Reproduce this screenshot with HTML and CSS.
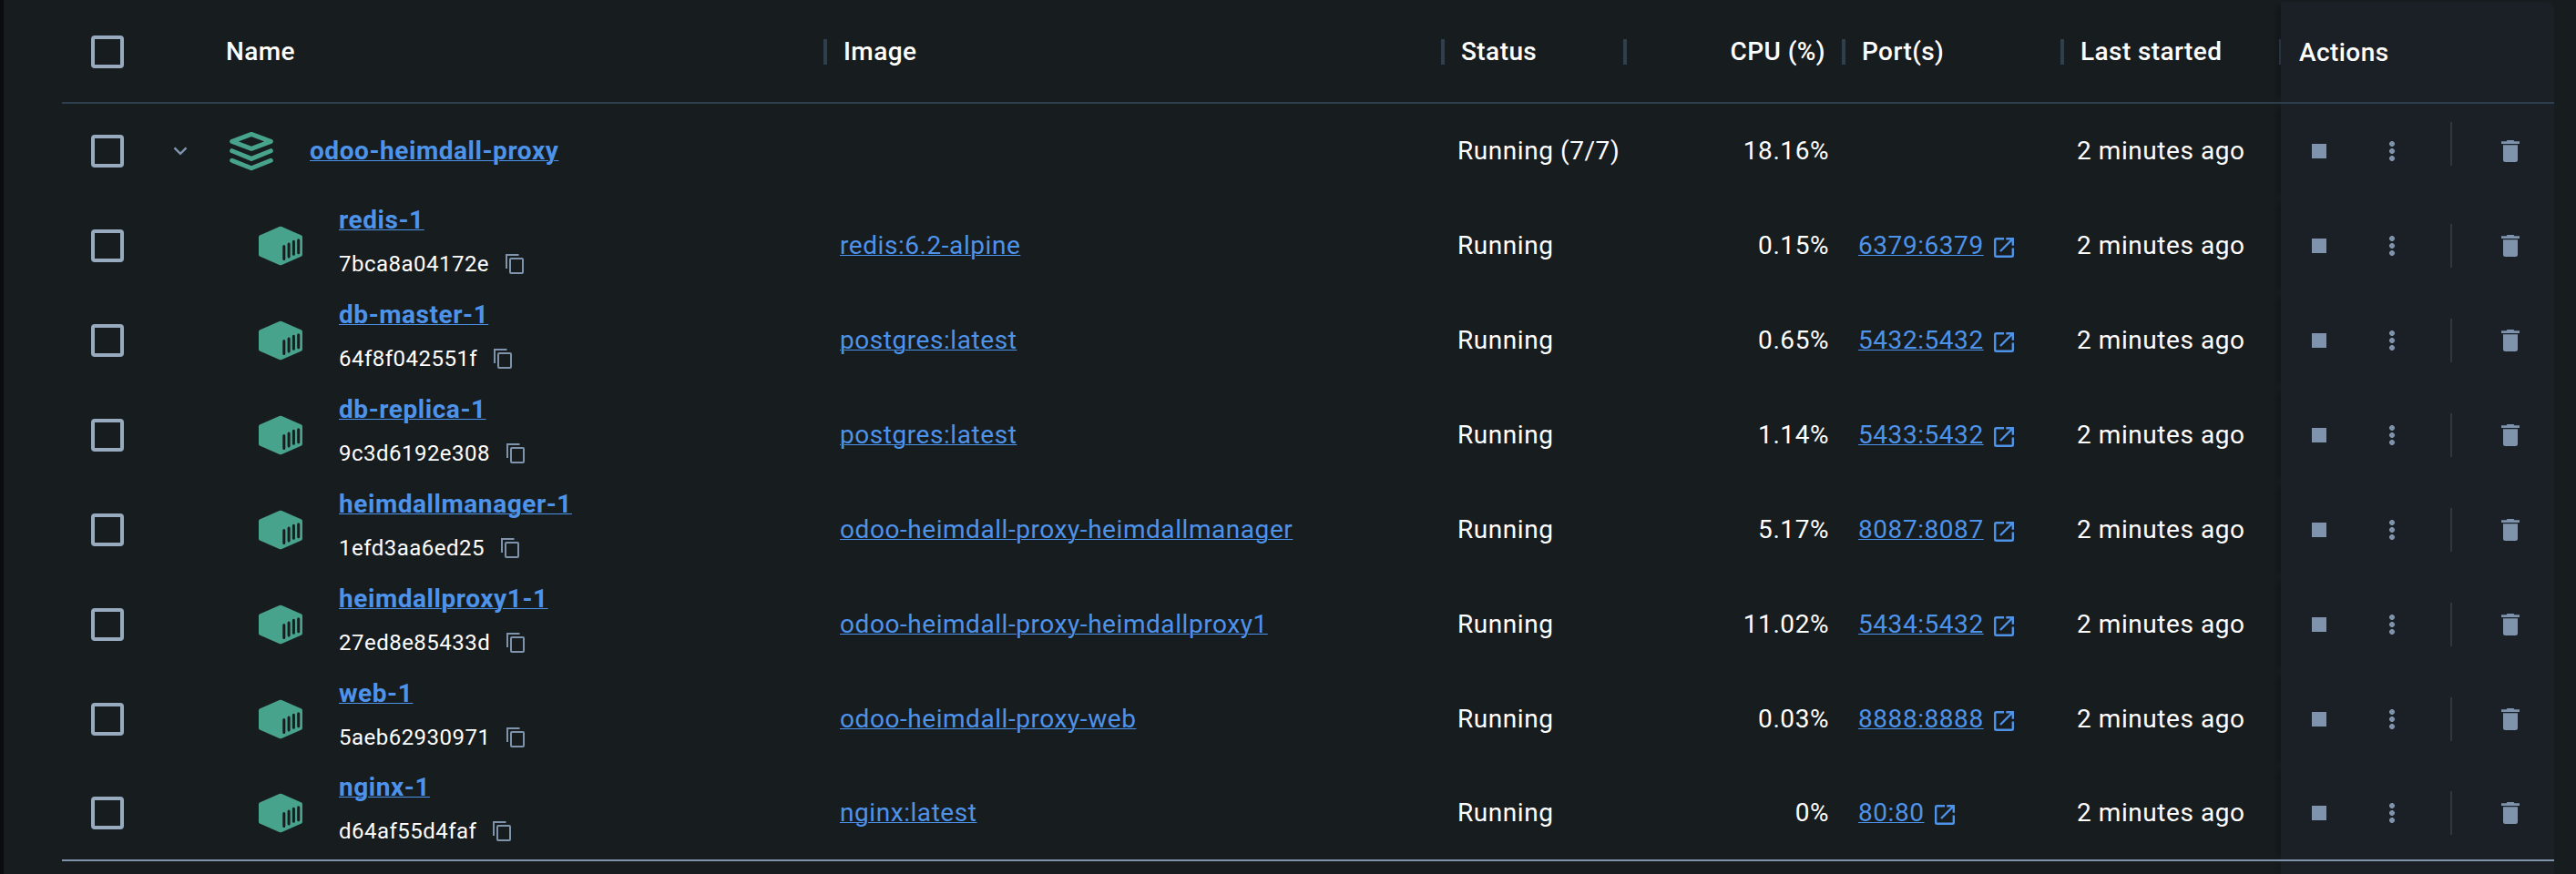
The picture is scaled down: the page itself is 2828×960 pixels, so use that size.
FILE: index.html
```html
<!DOCTYPE html>
<html lang="en">
<head>
<meta charset="utf-8">
<title>Containers</title>
<link rel="stylesheet" href="styles.css">
</head>
<body>
<svg class="sprite" aria-hidden="true">
  <symbol id="chevron" viewBox="0 0 16 10"><path d="M1.500 1.300 8 7.800l6.500-6.500" fill="none" stroke="currentColor" stroke-width="2.400"/></symbol>
  <symbol id="stack" viewBox="0 0 48 44"><g fill="none" stroke="currentColor" stroke-width="5" stroke-linejoin="round" stroke-linecap="round"><path d="M24 3.400 45.300 11.300 24 19.300 2.700 11.300z"/><path d="M2.700 21.700 24 30.400l21.300-8.700M2.700 32.300 24 40.800l21.300-8.500"/></g></symbol>
  <symbol id="cube" viewBox="0 0 48 44"><path d="M22.600 1a4 4 0 0 1 2.800 0L47 10.600q1 .5 1 1.600v19.600q0 1.100-1 1.600L25.400 43a4 4 0 0 1-2.800 0L1 33.400q-1-.5-1-1.600V12.200q0-1.100 1-1.600z" fill="currentColor"/><path d="M27.800 22.500v14M33.100 20v14M38.400 17.300v14M43.700 15.800v14" stroke="#171c1f" stroke-width="3" stroke-linecap="round"/></symbol>
  <symbol id="copy" viewBox="0 0 20 22"><path d="M1 16V1h13.500" fill="none" stroke="currentColor" stroke-width="2"/><rect x="5" y="5" width="14" height="16" rx="1" fill="none" stroke="currentColor" stroke-width="2"/></symbol>
  <symbol id="open" viewBox="0 0 22 22"><path d="M11 1.200H2.500Q1.200 1.200 1.200 2.500v17q0 1.300 1.300 1.300h17q1.300 0 1.300-1.300V11.500M13.300 1.200h7.500v7.500M20.500 1.500 7 15" fill="none" stroke="currentColor" stroke-width="2.400"/></symbol>
  <symbol id="trash" viewBox="0 0 20 24"><path d="M0 1.300h5.500L6.500 0h7l1 1.300H20V4H0zM2 5.300h16V21.500Q18 24 15.500 24h-11Q2 24 2 21.500z" fill="currentColor"/></symbol>
</svg>
<main class="table">
  <div class="row head">
    <div class="name"><span class="check"></span><span class="title">Name</span></div>
    <div class="cell image">Image</div><div class="cell status">Status</div><div class="cell cpu">CPU (%)</div><div class="cell ports">Port(s)</div><div class="cell started">Last started</div>
    <div class="actions">Actions</div>
  </div>
  <div class="row group">
    <div class="name"><span class="check"></span><svg class="chevron"><use href="#chevron"/></svg><svg class="stack"><use href="#stack"/></svg><a class="link bold">odoo-heimdall-proxy</a></div>
    <div class="cell image"></div><div class="cell status">Running (7/7)</div><div class="cell cpu">18.16%</div><div class="cell ports"></div><div class="cell started">2 minutes ago</div>
    <div class="actions"><i class="stop"></i><i class="dots"></i><i class="rule"></i><svg class="trash"><use href="#trash"/></svg></div>
  </div>
  <div class="row">
    <div class="name"><span class="check"></span><svg class="cube"><use href="#cube"/></svg><div class="ident"><a class="link bold">redis-1</a><div class="hash">7bca8a04172e<svg class="copy"><use href="#copy"/></svg></div></div></div>
    <div class="cell image"><a class="link">redis:6.2-alpine</a></div><div class="cell status">Running</div><div class="cell cpu">0.15%</div><div class="cell ports"><a class="link">6379:6379</a><svg class="open"><use href="#open"/></svg></div><div class="cell started">2 minutes ago</div>
    <div class="actions"><i class="stop"></i><i class="dots"></i><i class="rule"></i><svg class="trash"><use href="#trash"/></svg></div>
  </div>
  <div class="row">
    <div class="name"><span class="check"></span><svg class="cube"><use href="#cube"/></svg><div class="ident"><a class="link bold">db-master-1</a><div class="hash">64f8f042551f<svg class="copy"><use href="#copy"/></svg></div></div></div>
    <div class="cell image"><a class="link">postgres:latest</a></div><div class="cell status">Running</div><div class="cell cpu">0.65%</div><div class="cell ports"><a class="link">5432:5432</a><svg class="open"><use href="#open"/></svg></div><div class="cell started">2 minutes ago</div>
    <div class="actions"><i class="stop"></i><i class="dots"></i><i class="rule"></i><svg class="trash"><use href="#trash"/></svg></div>
  </div>
  <div class="row">
    <div class="name"><span class="check"></span><svg class="cube"><use href="#cube"/></svg><div class="ident"><a class="link bold">db-replica-1</a><div class="hash">9c3d6192e308<svg class="copy"><use href="#copy"/></svg></div></div></div>
    <div class="cell image"><a class="link">postgres:latest</a></div><div class="cell status">Running</div><div class="cell cpu">1.14%</div><div class="cell ports"><a class="link">5433:5432</a><svg class="open"><use href="#open"/></svg></div><div class="cell started">2 minutes ago</div>
    <div class="actions"><i class="stop"></i><i class="dots"></i><i class="rule"></i><svg class="trash"><use href="#trash"/></svg></div>
  </div>
  <div class="row">
    <div class="name"><span class="check"></span><svg class="cube"><use href="#cube"/></svg><div class="ident"><a class="link bold">heimdallmanager-1</a><div class="hash">1efd3aa6ed25<svg class="copy"><use href="#copy"/></svg></div></div></div>
    <div class="cell image"><a class="link">odoo-heimdall-proxy-heimdallmanager</a></div><div class="cell status">Running</div><div class="cell cpu">5.17%</div><div class="cell ports"><a class="link">8087:8087</a><svg class="open"><use href="#open"/></svg></div><div class="cell started">2 minutes ago</div>
    <div class="actions"><i class="stop"></i><i class="dots"></i><i class="rule"></i><svg class="trash"><use href="#trash"/></svg></div>
  </div>
  <div class="row">
    <div class="name"><span class="check"></span><svg class="cube"><use href="#cube"/></svg><div class="ident"><a class="link bold">heimdallproxy1-1</a><div class="hash">27ed8e85433d<svg class="copy"><use href="#copy"/></svg></div></div></div>
    <div class="cell image"><a class="link">odoo-heimdall-proxy-heimdallproxy1</a></div><div class="cell status">Running</div><div class="cell cpu">11.02%</div><div class="cell ports"><a class="link">5434:5432</a><svg class="open"><use href="#open"/></svg></div><div class="cell started">2 minutes ago</div>
    <div class="actions"><i class="stop"></i><i class="dots"></i><i class="rule"></i><svg class="trash"><use href="#trash"/></svg></div>
  </div>
  <div class="row">
    <div class="name"><span class="check"></span><svg class="cube"><use href="#cube"/></svg><div class="ident"><a class="link bold">web-1</a><div class="hash">5aeb62930971<svg class="copy"><use href="#copy"/></svg></div></div></div>
    <div class="cell image"><a class="link">odoo-heimdall-proxy-web</a></div><div class="cell status">Running</div><div class="cell cpu">0.03%</div><div class="cell ports"><a class="link">8888:8888</a><svg class="open"><use href="#open"/></svg></div><div class="cell started">2 minutes ago</div>
    <div class="actions"><i class="stop"></i><i class="dots"></i><i class="rule"></i><svg class="trash"><use href="#trash"/></svg></div>
  </div>
  <div class="row last">
    <div class="name"><span class="check"></span><svg class="cube"><use href="#cube"/></svg><div class="ident"><a class="link bold">nginx-1</a><div class="hash">d64af55d4faf<svg class="copy"><use href="#copy"/></svg></div></div></div>
    <div class="cell image"><a class="link">nginx:latest</a></div><div class="cell status">Running</div><div class="cell cpu">0%</div><div class="cell ports"><a class="link">80:80</a><svg class="open"><use href="#open"/></svg></div><div class="cell started">2 minutes ago</div>
    <div class="actions"><i class="stop"></i><i class="dots"></i><i class="rule"></i><svg class="trash"><use href="#trash"/></svg></div>
  </div>
  <div class="row foot"><div class="actions"></div></div>
</main>
</body>
</html>
```
FILE: styles.css
```css
* { box-sizing: border-box; }
body {
  margin: 0; height: 960px; overflow: hidden;
  background: #171c1f; border-left: 4px solid #0b0c10;
  color: #fff; font: 400 28px/40px Roboto, sans-serif; letter-spacing: .56px;
}
.sprite { position: absolute; width: 0; height: 0; }
svg { display: block; flex: none; }
.table { padding: 2px 24px 0 64px; }
.row { display: grid; grid-template-columns: 836px 678px 200px 240px 240px 242px 300px; height: 104px; }
.row > * { display: flex; align-items: center; min-width: 0; white-space: nowrap; }
.head { height: 112px; border-bottom: 2px solid #2f3e4c; font-weight: 500; letter-spacing: .42px; }
.last { height: 104px; border-bottom: 2px solid #7f94ac; }
.foot { height: 14px; }
.name { padding-left: 32px; }
.check { width: 36px; height: 36px; border: 4px solid #98aabd; border-radius: 4px; flex: none; }
.title { margin-left: 112px; }
.cell { padding-left: 18px; }
.cell.cpu { justify-content: flex-end; padding: 0 14px 0 0; }
.head .cell::before { content: ""; width: 4px; height: 28px; background: #2f3e4c; margin-right: 18px; }
.head .cell { padding-left: 0; }
.head .cpu::before { margin-right: auto; }
.head .cell.cpu { padding-right: 18px; }
.head .started::after { content: ""; width: 2px; height: 28px; background: #2f3e4c; margin-left: auto; }
.actions { background: #1b2027; box-shadow: -6px 0 8px -4px rgba(0,0,0,.3); clip-path: inset(0 0 0 -8px); }
.head .actions { padding: 2px 0 0 20px; border-top-right-radius: 8px; }
.foot .actions { grid-column: 7; }
.link { color: #4e93ea; text-decoration: underline; text-decoration-thickness: 1px; text-underline-offset: 1px; }
.bold { font-weight: 700; }
.chevron { width: 16px; height: 10px; margin-left: 54px; color: #7f94ac; }
.stack { width: 48px; height: 44px; margin: 0 40px 0 46px; color: #48a38c; }
.cube { width: 48px; height: 44px; margin: 0 40px 0 148px; color: #48a38c; }
.ident { display: flex; flex-direction: column; }
.ident .bold { line-height: 39px; }
.hash { display: flex; align-items: center; font-size: 24px; line-height: 58px; letter-spacing: .48px; }
.copy { width: 20px; height: 22px; margin-left: 18px; color: #7f94ac; }
.open { width: 22px; height: 22px; margin: 4px 0 0 11px; color: #4e93ea; }
.stop { width: 16px; height: 16px; margin-left: 34px; background: #7f94ac; }
.dots { width: 6px; height: 22px; margin-left: 69px; background: radial-gradient(circle, #7f94ac 2.600px, transparent 3.200px) 0 -1px / 6px 8px; }
.rule { width: 2px; height: 48px; margin-left: 61px; background: #31373a; }
.group .rule { transform: translateY(-8px); }
.trash { width: 20px; height: 24px; margin-left: 54px; color: #7f94ac; }
```
